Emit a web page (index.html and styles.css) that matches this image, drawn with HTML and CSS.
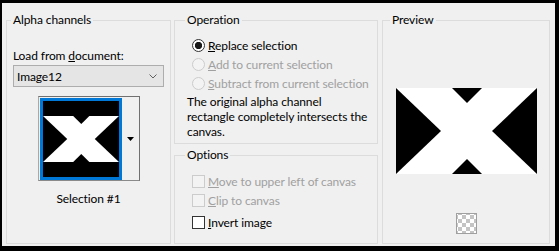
FILE: index.html
```html
<!DOCTYPE html>
<html lang="en">
<head>
  <meta charset="UTF-8" />
  <title>Load Selection From Alpha Channel</title>
  <link rel="stylesheet" href="styles.css">
</head>
<body>
  <div class="window">
    <fieldset class="group alpha">
      <legend>Alpha channels</legend>
      <div class="alpha-body">
        <div class="field-label">Load from <u>d</u>ocument:</div>
        <div class="combo">
          <span>Image12</span>
          <svg class="chevron" width="8" height="5" viewBox="0 0 8 5">
            <path d="M0.5 0.5 L4 4 L7.5 0.5" fill="none" stroke="#606060" stroke-width="1" />
          </svg>
        </div>
        <div class="thumb-picker">
          <div class="thumb">
            <div class="thumb-frame">
              <svg class="thumb-img" width="76" height="46" viewBox="0 0 141 86" preserveAspectRatio="none">
                <rect width="141" height="86" fill="#fff" />
                <polygon points="0,0 45,43 0,86" fill="#000" />
                <polygon points="141,0 96,43 141,86" fill="#000" />
                <polygon points="56,0 71,15 86,0" fill="#000" />
                <polygon points="56,86 71,71 86,86" fill="#000" />
              </svg>
            </div>
          </div>
          <div class="thumb-drop">
            <svg width="7" height="4" viewBox="0 0 7 4">
              <polygon points="0,0 7,0 3.5,4" fill="#000" />
            </svg>
          </div>
        </div>
        <div class="thumb-caption">Selection #1</div>
      </div>
    </fieldset>

    <div class="middle">
      <fieldset class="group operation">
        <legend>Operation</legend>
        <div class="group-body">
          <label class="choice"><input type="radio" name="op" checked><span><u>R</u>eplace selection</span></label>
          <label class="choice disabled"><input type="radio" name="op" disabled><span><u>A</u>dd to current selection</span></label>
          <label class="choice disabled"><input type="radio" name="op" disabled><span><u>S</u>ubtract from current selection</span></label>
          <p class="note">The original alpha channel<br>rectangle completely intersects the<br>canvas.</p>
        </div>
      </fieldset>

      <fieldset class="group options">
        <legend>Options</legend>
        <div class="group-body options-body">
          <label class="choice disabled"><input type="checkbox" disabled><span><u>M</u>ove to upper left of canvas</span></label>
          <label class="choice disabled"><input type="checkbox" disabled><span><u>C</u>lip to canvas</span></label>
          <label class="choice invert"><input type="checkbox"><span><u>I</u>nvert image</span></label>
        </div>
      </fieldset>
    </div>

    <fieldset class="group preview">
      <legend>Preview</legend>
      <div class="preview-body">
        <svg class="preview-img" width="141" height="86" viewBox="0 0 141 86">
          <rect width="141" height="86" fill="#fff" />
          <polygon points="0,0 45,43 0,86" fill="#000" />
          <polygon points="141,0 96,43 141,86" fill="#000" />
          <polygon points="56,0 71,15 86,0" fill="#000" />
          <polygon points="56,86 71,71 86,86" fill="#000" />
        </svg>
        <div class="checker"></div>
      </div>
    </fieldset>
  </div>
</body>
</html>
```

FILE: styles.css
```css
body {
  margin: 0;
  font-family: Lato, "Noto Sans", sans-serif;
  font-size: 12px;
  letter-spacing: -0.1px;
  color: #000;
  background: #000;
}

.window {
  box-sizing: border-box;
  width: 559px;
  height: 251px;
  border-style: solid;
  border-color: #000;
  border-width: 3px 4px 5px 2px;
  background: #f0f0f0;
  padding: 10px 4px 2px 4px;
  display: grid;
  grid-template-columns: 165px 204px 169px;
  column-gap: 3px;
  white-space: nowrap;
}

/* group boxes */
.group {
  margin: 0;
  padding: 0;
  border: 1px solid #dcdcdc;
  min-width: 0;
}

.group legend {
  padding: 0 2px;
  line-height: 14px;
}

.alpha legend {
  margin-left: 4px;
}

.operation legend,
.options legend {
  margin-left: 10px;
}

.preview legend {
  margin-left: 7px;
}

.preview {
  margin-left: 1px;
}

/* alpha channels */
.alpha-body {
  padding: 21px 6px 0 6px;
  display: flex;
  flex-direction: column;
}

.field-label {
  line-height: 15px;
}

.combo {
  box-sizing: border-box;
  height: 22px;
  margin-top: 2px;
  border: 1px solid #adadad;
  background: #e5e5e5;
  display: flex;
  align-items: center;
  justify-content: space-between;
  padding: 0 6px 0 3px;
}

.thumb-picker {
  box-sizing: border-box;
  align-self: center;
  width: 102px;
  height: 85px;
  margin-top: 9px;
  display: flex;
  border: 1px solid #707070;
  border-left-color: #a8a8a8;
  border-bottom-color: #8a8a8a;
}

.thumb {
  padding: 1px;
}

.thumb-frame {
  width: 76px;
  height: 76px;
  border: 3px solid #0078d7;
  background: #000;
  display: flex;
  align-items: center;
}

.thumb-img {
  display: block;
}

.thumb-drop {
  flex: 1;
  display: flex;
  align-items: center;
  justify-content: center;
}

.thumb-caption {
  margin-top: 10px;
  line-height: 15px;
  text-align: center;
}

/* operation and options */
.middle {
  display: flex;
  flex-direction: column;
  gap: 4px;
}

.options {
  flex: 1;
}

.group-body {
  padding: 9px 8px 4px 12px;
}

.options-body {
  padding-top: 10px;
}

.choice {
  display: flex;
  align-items: center;
  height: 19px;
  padding-left: 5px;
}

.choice.disabled {
  color: #a0a0a0;
}

.choice.invert {
  margin-top: 3px;
}

.choice input {
  appearance: none;
  -webkit-appearance: none;
  box-sizing: border-box;
  width: 13px;
  height: 13px;
  margin: 0 3px 0 0;
  border: 1px solid #333;
  background: #fff;
}

.choice input[type="radio"] {
  border-radius: 50%;
}

.choice input[type="radio"]:checked {
  background: radial-gradient(circle, #1a1a1a 0 3.4px, #fff 3.9px);
}

.choice input:disabled {
  border-color: #cccccc;
  background: #f3f3f3;
}

.note {
  margin: 1px 0 0;
  line-height: 15px;
}

/* preview */
.preview-body {
  display: flex;
  flex-direction: column;
  align-items: center;
  padding-top: 61px;
}

.preview-img {
  display: block;
}

.checker {
  box-sizing: border-box;
  width: 21px;
  height: 21px;
  margin-top: 39px;
  border: 1px solid #a0a0a0;
  background: repeating-conic-gradient(#c4c4c4 0 25%, #fff 0 50%) 1px 1px / 8px 8px;
}
```
